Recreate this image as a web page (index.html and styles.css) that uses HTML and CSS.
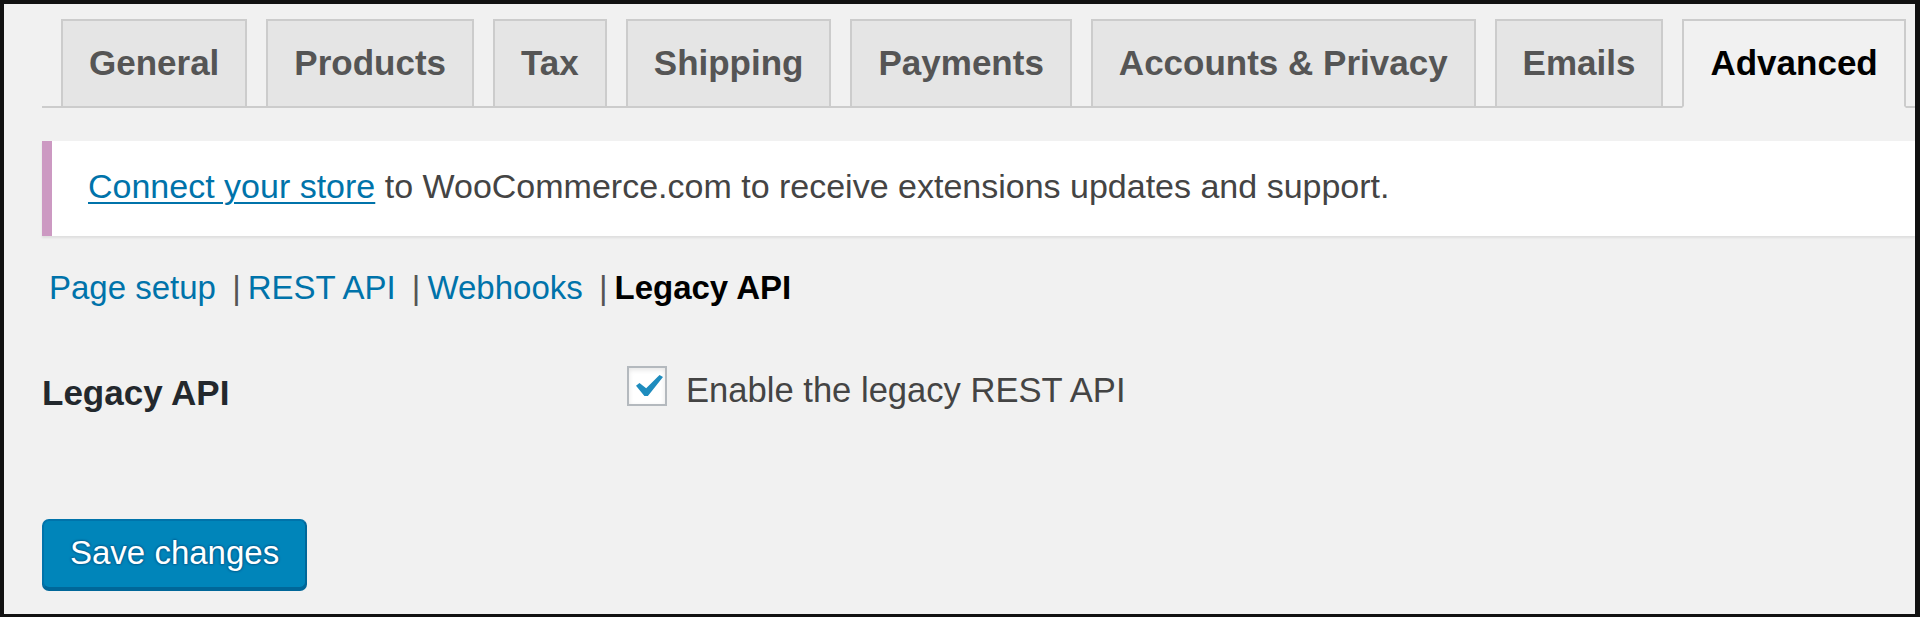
FILE: index.html
```html
<!DOCTYPE html>
<html lang="en">
<head>
<meta charset="utf-8">
<title>WooCommerce Settings - Advanced - Legacy API</title>
<link rel="stylesheet" href="styles.css">
</head>
<body>
<div class="frame">
  <div class="wrap">
    <nav class="tabs">
      <a class="tab" href="#">General</a>
      <a class="tab" href="#">Products</a>
      <a class="tab" href="#">Tax</a>
      <a class="tab" href="#">Shipping</a>
      <a class="tab" href="#">Payments</a>
      <a class="tab" href="#">Accounts &amp; Privacy</a>
      <a class="tab" href="#">Emails</a>
      <a class="tab tab-active" href="#">Advanced</a>
    </nav>

    <div class="notice">
      <p><a href="#">Connect your store</a> to WooCommerce.com to receive extensions updates and support.</p>
    </div>

    <ul class="subnav"><li><a href="#">Page setup</a> |</li><li><a href="#">REST API</a> |</li><li><a href="#">Webhooks</a> |</li><li><a href="#" class="current">Legacy API</a></li></ul>

    <div class="form-row">
      <div class="th">Legacy API</div>
      <div class="td">
        <label class="check-label"><span class="checkbox"><svg class="check" width="27" height="21" viewBox="5.78 4.89 10.39 9.32" preserveAspectRatio="none"><path d="M14.83 4.89l1.34.94-5.81 8.38H9.02L5.78 9.670l1.34-1.25 2.57 2.4z" fill="#1e8cbe"/></svg></span>Enable the legacy REST API</label>
      </div>
    </div>

    <div class="submit">
      <button class="button-primary" type="button">Save changes</button>
    </div>
  </div>
</div>
</body>
</html>
```

FILE: styles.css
```css
html, body {
  margin: 0;
  padding: 0;
  background: #111;
}

body {
  font-family: "Liberation Sans", Arial, sans-serif;
}

.frame {
  margin: 4px 5px 3px 4px;
  height: 610px;
  background: #f1f1f1;
  overflow: hidden;
}

.wrap {
  padding: 15px 0 0 38px;
}

/* Tabs */
.tabs {
  display: flex;
  align-items: flex-end;
  border-bottom: 2px solid #ccc;
}

.tab {
  display: block;
  margin-left: 19px;
  padding: 12px 26px 13px;
  border: 2px solid #ccc;
  border-bottom: none;
  background: #e5e5e5;
  color: #555;
  font-size: 35px;
  font-weight: 700;
  line-height: 60px;
  text-decoration: none;
  white-space: nowrap;
}

.tab-active {
  background: #f1f1f1;
  color: #000;
  border-bottom: 2px solid #f1f1f1;
  margin-bottom: -2px;
}

/* Notice */
.notice {
  margin-top: 33px;
  height: 95px;
  box-sizing: border-box;
  background: #fff;
  border-left: 10px solid #cc99c2;
  box-shadow: 0 2px 2px rgba(0, 0, 0, 0.08);
}

.notice p {
  margin: 0;
  padding: 0 0 4px 36px;
  font-size: 34px;
  line-height: 91px;
  color: #444;
  white-space: nowrap;
}

.notice a {
  color: #0073aa;
  text-decoration: underline;
  text-decoration-thickness: 2px;
  text-underline-offset: 4px;
}

/* Sub navigation */
.subnav {
  list-style: none;
  margin: 27px 0 0;
  padding: 0;
  font-size: 33px;
  line-height: 50px;
  color: #555;
  white-space: nowrap;
}

.subnav li {
  display: inline-block;
}

.subnav a {
  padding: 0 7px;
  color: #0073aa;
  text-decoration: none;
}

.subnav a.current {
  color: #000;
  font-weight: 700;
}

/* Form row */
.form-row {
  display: flex;
  align-items: flex-start;
  margin-top: 53px;
}

.th {
  width: 585px;
  flex: none;
  padding-top: 4px;
  font-size: 35px;
  font-weight: 700;
  line-height: 46px;
  color: #23282d;
}

.td {
  flex: 1;
}

.check-label {
  font-size: 34.6px;
  line-height: 46px;
  color: #444;
  white-space: nowrap;
}

.checkbox {
  display: inline-block;
  vertical-align: -4px;
  width: 40px;
  height: 40px;
  box-sizing: border-box;
  margin-right: 19px;
  border: 2px solid #b4b9be;
  background: #fff;
  box-shadow: inset 0 2px 5px rgba(0, 0, 0, 0.1);
}

.check {
  display: block;
  margin: 7px 0 0 7px;
}

/* Submit */
.submit {
  margin-top: 103px;
}

.button-primary {
  display: inline-block;
  height: 70px;
  box-sizing: border-box;
  margin: 0;
  padding: 0 26px 2px;
  border: 2px solid #0073aa;
  border-bottom-color: #006799;
  border-right-color: #006799;
  border-radius: 7px;
  background: #0085ba;
  box-shadow: 0 2px 0 #006799;
  color: #fff;
  font-family: "Liberation Sans", Arial, sans-serif;
  font-size: 33px;
  line-height: 64px;
  text-shadow: 0 -1px 2px #006799, 1px 0 2px #006799, 0 1px 2px #006799, -1px 0 2px #006799;
  cursor: pointer;
}
```
